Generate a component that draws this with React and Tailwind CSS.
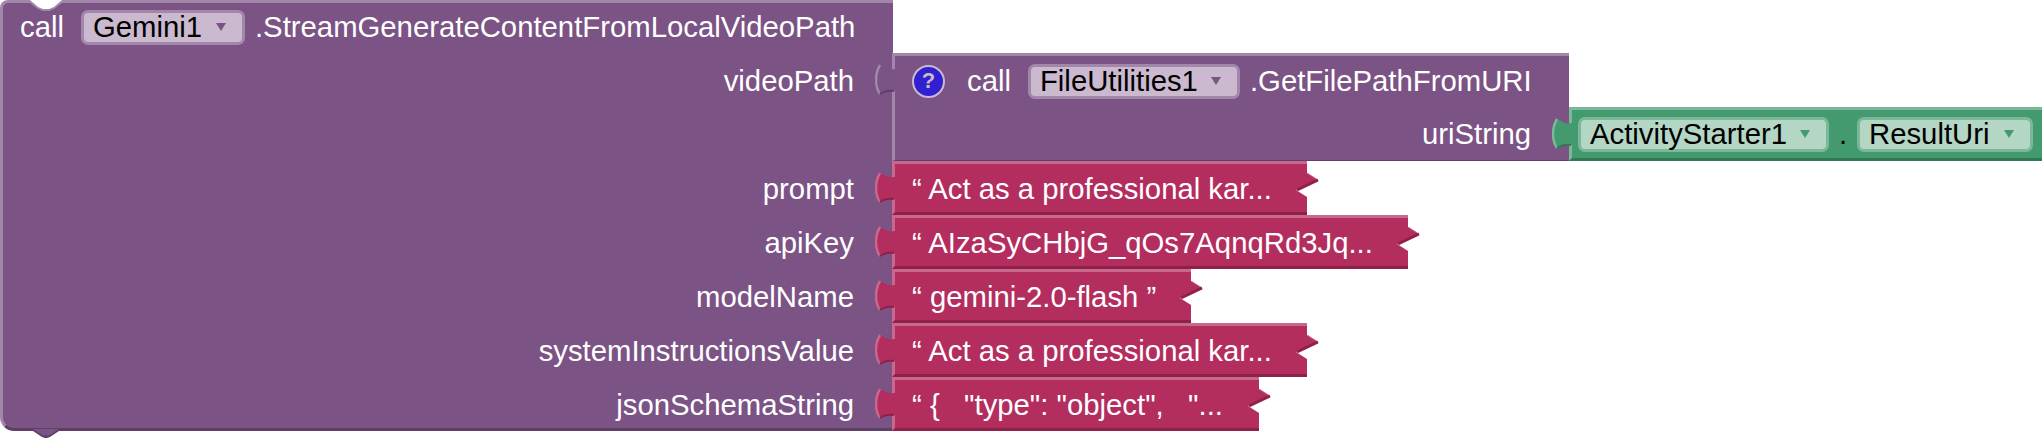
const font = { fontFamily: '"Liberation Sans", Arial, sans-serif' };

// puzzle tab on the left of a socketed block
const Tab = ({ fill, light, dark }) => (
    <svg className="absolute left-[-20px] top-[8px]" width="20" height="32" viewBox="0 0 20 32">
        <path d="M20 5 C15 6 12 5 9 3 L5 1 C2 6 1 10 1 16 C1 22 2 26 5 30 C9 27 13 26 20 27 Z" fill={fill} />
        <path d="M5 1 C2 6 1 10 1 16 C1 22 2 26 5 30" fill="none" stroke={light} strokeWidth="2.5" />
        <path d="M5 30 C9 27 13 26 19 27" fill="none" stroke={dark} strokeWidth="2" />
    </svg>
);

// the notch cut in the right edge of a text block
const OutputNotch = () => (
    <svg className="absolute right-[-12px] top-[9px]" width="24" height="26" viewBox="0 0 24 26">
        <path d="M12 0 L23 7 L12 14 Z" fill="#b32d5e" />
        <path d="M23 7 L1 17 L12 24 L24 24 L24 7 Z" fill="#ffffff" />
        <path d="M12 0 L23 7" fill="none" stroke="#c8688c" strokeWidth="1" />
        <path d="M23 7 L2 17" fill="none" stroke="#8e2049" strokeWidth="3" />
    </svg>
);

const Field = ({ text, width, green }) => (
    <div className={`flex items-center justify-between h-[35px] rounded-[7px] border-[3px] pl-[9px] pr-[15px] text-black ${green ? "bg-[#b3d6c5] border-[#7bb89a]" : "bg-[#cbb9cf] border-[#a387aa]"}`} style={{ width }}>
        <span>{text}</span>
        <svg width="12" height="10" viewBox="0 0 12 10">
            <path d="M1 1 L11 1 L6 9 Z" fill={green ? "#439a6e" : "#7c5385"} />
        </svg>
    </div>
);

const StringBlock = ({ text, width }) => (
    <div className="relative h-[54px] bg-[#b32d5e] border-t-[3px] border-l-[3px] border-b-[3px] border-t-[#c8688c] border-l-[#c8688c] border-b-[#8e2049] flex items-center pl-[17px] text-white whitespace-pre" style={{ width }}>
        <Tab fill="#b32d5e" light="#c8688c" dark="#8e2049" />
        <span className="mt-[2px]">{text}</span>
        <OutputNotch />
    </div>
);

const Label = ({ text, height = "h-[54px]" }) => (
    <div className={`w-[892px] shrink-0 ${height} pr-[38px] text-right text-white flex items-center justify-end`}>
        <span className="mt-[2px]">{text}</span>
    </div>
);

const rows = [
    { label: "prompt", text: "“ Act as a professional kar...", width: 415 },
    { label: "apiKey", text: "“ AIzaSyCHbjG_qOs7AqnqRd3Jq...", width: 516 },
    { label: "modelName", text: "“ gemini-2.0-flash ”", width: 299 },
    { label: "systemInstructionsValue", text: "“ Act as a professional kar...", width: 415 },
    { label: "jsonSchemaString", text: "“ {   \"type\": \"object\",   \"...", width: 367 },
];

export default function App() {
    return (
        <div className="relative w-[2042px] h-[440px] bg-white overflow-hidden text-[29.3px] leading-none" style={font}>
            {/* Main call block */}
            <div className="relative w-[893px] h-[431px] bg-[#7c5385] border-l-[3px] border-t-[3px] border-b-[3px] border-l-[#a387aa] border-t-[#a387aa] border-b-[#5f3f66] rounded-tl-[8px] rounded-bl-[14px]">
                <div className="flex items-center h-[48px] pl-[17px] text-white">
                    <span>call</span>
                    <div className="ml-[17px]">
                        <Field text="Gemini1" width={164} />
                    </div>
                    <span className="ml-[10px]">.StreamGenerateContentFromLocalVideoPath</span>
                </div>
                <svg className="absolute left-[27px] top-[-3px]" width="32" height="12" viewBox="0 0 32 12">
                    <path d="M0 3 L8 9 L13 11 L19 11 L24 9 L32 3 Z" fill="#a387aa" />
                    <path d="M0 0 L8 7 L13 9 L19 9 L24 7 L32 0 Z" fill="#ffffff" />
                </svg>
                <svg className="absolute left-[27px] bottom-[-11px]" width="32" height="10" viewBox="0 0 32 10">
                    <path d="M0 0 L12 8 L15 9 L17 9 L20 8 L32 0 Z" fill="#5f3f66" />
                    <path d="M3 0 L13 6.5 L19 6.5 L29 0 Z" fill="#7c5385" />
                </svg>
            </div>

            {/* Sockets and attached blocks */}
            <div className="absolute left-0 top-[53px] flex flex-col">
                <div className="flex">
                    <Label text="videoPath" height="h-[54px]" />
                    <div className="relative w-[677px] h-[108px] bg-[#7c5385] border-t-[3px] border-l-[3px] border-b-[1px] border-t-[#a387aa] border-l-[#a387aa] border-b-[#5f3f66]">
                        <Tab fill="#7c5385" light="#a387aa" dark="#5f3f66" />
                        <div className="flex items-center h-[50px] pl-[17px] text-white">
                            <div className="flex items-center justify-center w-[33px] h-[33px] rounded-full bg-[#3020d0] border-[2px] border-[#cbb9cf] text-[#cbb9cf] text-[22px] font-bold">?</div>
                            <span className="ml-[22px]">call</span>
                            <div className="ml-[17px]">
                                <Field text="FileUtilities1" width={212} />
                            </div>
                            <span className="ml-[10px]">.GetFilePathFromURI</span>
                        </div>
                        <div className="flex items-center justify-end h-[56px] pr-[38px] text-white">uriString</div>
                        {/* attached green getter block */}
                        <div className="absolute left-[674px] top-[51px] flex items-center w-[473px] h-[54px] bg-[#439a6e] border-t-[3px] border-l-[3px] border-b-[3px] border-t-[#7bb89a] border-l-[#7bb89a] border-b-[#2f7a54] pl-[6px] text-black">
                            <Tab fill="#439a6e" light="#7bb89a" dark="#2f7a54" />
                            <Field text="ActivityStarter1" width={251} green />
                            <span className="w-[28px] text-center">.</span>
                            <Field text="ResultUri" width={176} green />
                        </div>
                    </div>
                </div>
                {rows.map((row) => (
                    <div key={row.label} className="flex">
                        <Label text={row.label} />
                        <StringBlock text={row.text} width={row.width} />
                    </div>
                ))}
            </div>
        </div>
    );
}
